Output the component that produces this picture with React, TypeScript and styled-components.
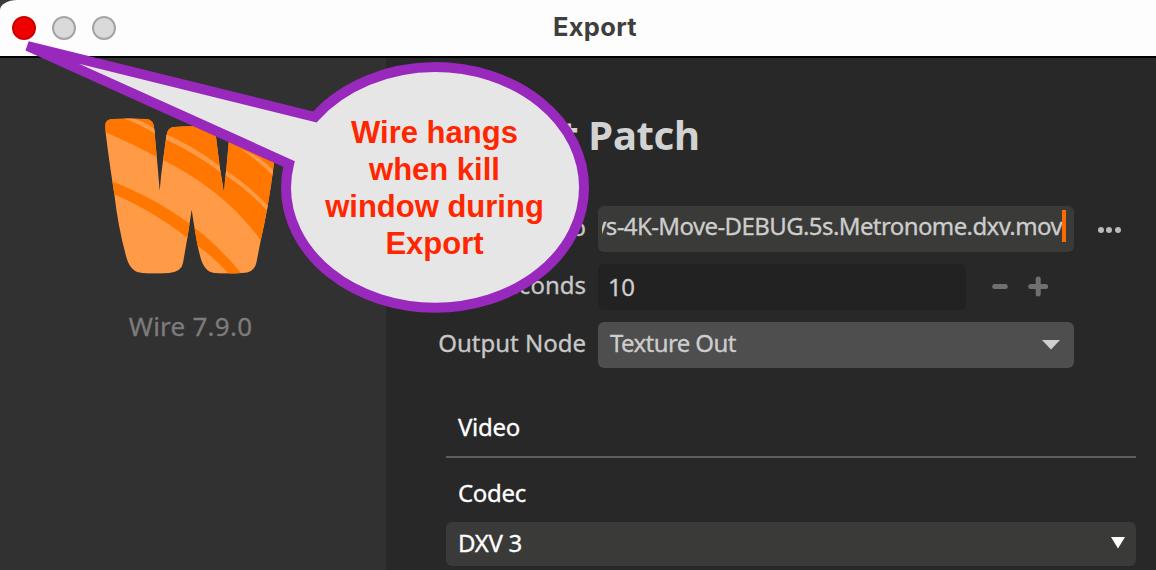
import React from 'react';
import styled, { createGlobalStyle } from 'styled-components';

const GlobalStyle = createGlobalStyle`
  * { box-sizing: border-box; }
  body { margin: 0; background: #3a3a3a; overflow: hidden; }
`;

const Window = styled.div`
  position: relative;
  display: flex;
  flex-direction: column;
  width: 1156px;
  height: 570px;
  overflow: hidden;
  border-top-left-radius: 17px 10px;
  background: #282828;
  font-family: 'Noto Sans', sans-serif;
  font-size: 24px;
  color: #cdcdcd;
  white-space: nowrap;
`;

const TitleBar = styled.header`
  display: grid;
  grid-template-columns: 1fr auto 1fr;
  align-items: center;
  flex: none;
  height: 58px;
  padding: 0 13px 0 12px;
  background: #fdfdfd;
  border-bottom: 2px solid #000;
`;

const Lights = styled.div`
  display: flex;
  gap: 16px;
`;

const Light = styled.span<{ $fill: string; $edge: string }>`
  width: 24px;
  height: 24px;
  border-radius: 50%;
  background: ${(p) => p.$fill};
  border: 2px solid ${(p) => p.$edge};
`;

const WindowTitle = styled.h1`
  margin: 0;
  padding: 0 0 2px 35px;
  font-family: 'Inter', 'Roboto', sans-serif;
  font-size: 25.5px;
  font-weight: 700;
  letter-spacing: 0.3px;
  line-height: 30px;
  color: #3e3e3e;
`;

const Body = styled.div`
  display: flex;
  flex: 1;
`;

const Sidebar = styled.aside`
  display: flex;
  flex-direction: column;
  align-items: center;
  width: 386px;
  padding: 60px 5px 0 0;
  background: #313131;
`;

const LogoImage = styled.svg`
  margin-right: 2px;
`;

const Version = styled.div`
  margin-top: 34px;
  font-size: 26px;
  letter-spacing: 0.25px;
  line-height: 36px;
  color: #7c7c7c;
  -webkit-text-stroke: 0.3px #7c7c7c;
`;

const Main = styled.main`
  flex: 1;
  padding: 47px 20px 0 38px;
`;

const Heading = styled.h2`
  margin: 0 0 42px 25px;
  font-size: 40px;
  letter-spacing: -0.3px;
  line-height: 59px;
  font-weight: 700;
  color: #d2d2d2;
`;

const Form = styled.div`
  display: grid;
  grid-template-columns: 174px 476px auto;
  row-gap: 12px;
`;

const Label = styled.label`
  padding-right: 12px;
  text-align: right;
  line-height: 41px;
  color: #c8c8c8;
  -webkit-text-stroke: 0.3px #c8c8c8;
`;

const Field = styled.div<{ $bg: string; $width?: number }>`
  display: flex;
  justify-content: space-between;
  width: ${(p) => p.$width ?? 476}px;
  height: 46px;
  padding: 0 12px;
  border-radius: 6px;
  background: ${(p) => p.$bg};
  letter-spacing: -0.6px;
  line-height: 42px;
  -webkit-text-stroke: 0.3px #cdcdcd;
`;

const PathField = styled(Field)`
  padding: 0 8px 0 4px;
`;

const PathText = styled.span`
  display: flex;
  justify-content: flex-end;
  flex: 1;
  overflow: hidden;
  line-height: 39px;
`;

const Caret = styled.span`
  width: 4px;
  height: 32px;
  margin-top: 4px;
  background: #ff6a00;
`;

const NumberField = styled(Field)`
  padding-left: 10px;
  line-height: 46px;
`;

const NumberRow = styled.div`
  display: flex;
`;

const Stepper = styled.svg`
  margin: 12px 0 0 25px;
`;

const Dots = styled.div`
  display: flex;
  gap: 2.5px;
  padding: 21px 0 0 23.5px;
`;

const Dot = styled.i`
  width: 6px;
  height: 6px;
  border-radius: 50%;
  background: #b9b9b9;
`;

const Arrow = styled.svg`
  margin: 18px 2px 0 0;
`;

const Section = styled.section`
  margin: 38px 0 0 22px;
  color: #fff;
  letter-spacing: -0.3px;
  -webkit-text-stroke: 0.3px #fff;
`;

const SectionTitle = styled.h3`
  height: 52px;
  margin: 0;
  padding-left: 12px;
  border-bottom: 2px solid #5d5d5d;
  font-size: 24px;
  font-weight: 400;
  line-height: 42px;
`;

const CodecLabel = styled.div`
  height: 64px;
  padding: 14px 0 0 12px;
  line-height: 41px;
`;

const CodecSelect = styled.div`
  display: flex;
  justify-content: space-between;
  height: 44px;
  padding: 0 11px 0 12px;
  border-radius: 6px;
  background: #3a3a38;
  line-height: 42px;
`;

const CodecArrow = styled.svg`
  margin-top: 15px;
`;

const Callout = styled.div`
  position: absolute;
  inset: 0;
`;

const CalloutShape = styled.svg`
  position: absolute;
  inset: 0;
`;

const CalloutText = styled.p`
  position: absolute;
  left: 291px;
  top: 114px;
  width: 287px;
  margin: 0;
  text-align: center;
  font: 700 31px/37px 'Liberation Sans', sans-serif;
  color: #ff2600;
`;

const Logo = () => (
  <LogoImage width="170" height="156" viewBox="43 37 510 468">
    <clipPath id="w">
      <path d="M44 62Q43 41 66 40Q115 37 166 40Q190 41 191 72L198 150Q203 205 207 255Q211 205 217 165L227 92Q229 66 250 64Q305 60 352 64Q374 66 376 94L388 190Q395 230 400 263Q402 228 407 190L414 112Q416 90 440 90H540Q556 92 554 130L549 180Q534 300 510 405L497 472Q490 501 455 502Q405 505 372 502Q340 499 328 450Q320 420 313 375Q307 340 303 312Q298 345 291 392L277 472Q273 498 235 502Q190 505 155 502Q121 501 108 458Q83 370 71 266Q55 165 45 82Z" />
    </clipPath>
    <g clipPath="url(#w)">
      <path fill="#ff9b46" d="M30 20H570V520H30Z" />
      <path fill="#ff7700" d="M40 78Q120 112 198 153Q410 256 515 412L590 400V20H30Z" />
      <path fill="#ff7700" d="M60 225Q200 280 297 355Q380 415 455 507L417 507Q370 455 321 421Q200 320 66 264Z" />
      <path fill="#ff9b46" d="M92 36L128 38Q165 50 192 70Q310 120 390 184Q470 235 532 300L530 316Q465 245 388 198Q310 140 226 102L191 83Q145 53 92 36Z" />
      <path fill="#ff9b46" d="M450 130L490 147Q520 165 550 196L548 212Q510 170 450 130Z" />
    </g>
  </LogoImage>
);

export default function App() {
  return (
    <>
      <GlobalStyle />
      <Window>
        <TitleBar>
          <Lights>
            <Light $fill="#ee0000" $edge="#cc0000" />
            <Light $fill="#dadada" $edge="#a5a5a5" />
            <Light $fill="#dadada" $edge="#a5a5a5" />
          </Lights>
          <WindowTitle>Export</WindowTitle>
        </TitleBar>
        <Body>
          <Sidebar>
            <Logo />
            <Version>Wire 7.9.0</Version>
          </Sidebar>
          <Main>
            <Heading>Export Patch</Heading>
            <Form>
              <Label>Export to</Label>
              <PathField $bg="#3a3a38">
                <PathText>Keys-4K-Move-DEBUG.5s.Metronome.dxv.mov</PathText>
                <Caret />
              </PathField>
              <Dots><Dot /><Dot /><Dot /></Dots>
              <Label>Seconds</Label>
              <NumberRow>
                <NumberField $bg="#222222" $width={368}>10</NumberField>
                <Stepper width="60" height="22" viewBox="0 0 60 22" stroke="#707070" strokeWidth="5" strokeLinecap="round">
                  <path d="M3.7 10.5H14.3M39.7 10.5H54.6M47.2 3V18" />
                </Stepper>
              </NumberRow>
              <span />
              <Label>Output Node</Label>
              <Field $bg="#4e4e4e">
                Texture Out
                <Arrow width="18" height="10" viewBox="0 0 18 10"><path d="M0 0H18L9 9.5Z" fill="#d0d0d0" /></Arrow>
              </Field>
              <span />
            </Form>
            <Section>
              <SectionTitle>Video</SectionTitle>
              <CodecLabel>Codec</CodecLabel>
              <CodecSelect>
                DXV 3
                <CodecArrow width="14" height="12" viewBox="0 0 14 12"><path d="M0 0H14L7 11.5Z" fill="#fff" /></CodecArrow>
              </CodecSelect>
            </Section>
          </Main>
        </Body>
        <Callout>
          <CalloutShape width="1156" height="570">
            <path
              d="M27.5 46L315 117A149 120.3 0 0 1 435 67.1A149 120.3 0 0 1 584 187.4A149 120.3 0 0 1 435 307.7A149 120.3 0 0 1 286 187.4Q286 176 289 164Z"
              fill="#e6e6e6" stroke="#9928bd" strokeWidth="10"
            />
          </CalloutShape>
          <CalloutText>Wire hangs<br />when kill<br />window during<br />Export</CalloutText>
        </Callout>
      </Window>
    </>
  );
}
